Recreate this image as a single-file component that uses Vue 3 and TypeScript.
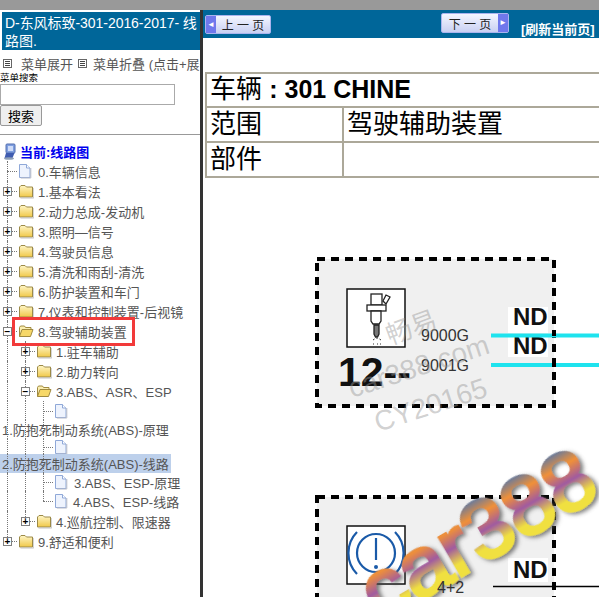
<template>
  <div class="page">
    <div class="top-strip"></div>
    <div class="frames">
      <aside class="side">
        <div class="title">D-东风标致-301-2016-2017- 线路图.</div>
        <div class="tools">
          <span class="tool-ico"></span><span class="tool-text">菜单展开</span>
          <span class="tool-ico second"></span><span class="tool-text">菜单折叠 (点击+展开)</span>
        </div>
        <label class="search-label">菜单搜索</label>
        <input class="search-input" type="text" />
        <button class="search-btn">搜索</button>
        <hr class="rule" />

        <div class="root">
          <svg class="root-ico" width="16" height="17" viewBox="0 0 16 17">
            <rect x="4" y="1" width="9" height="9" rx="1" fill="#7f9fe0" stroke="#5570b0" />
            <rect x="6" y="3" width="5" height="5" fill="#cfdcf8" />
            <path d="M4 10l-1.500 5h8l2-5z" fill="#3f5cb0" />
            <ellipse cx="7" cy="15.500" rx="5" ry="1.300" fill="#8fa0b8" />
          </svg>
          <span>当前:线路图</span>
        </div>

        <div class="tree">
          <div
            v-for="(row, i) in rows"
            :key="i"
            class="row"
            :class="{ hl: row.active }"
            :style="{ height: (row.h ?? 20) + 'px' }"
          >
            <i v-for="g in row.guides" :key="g" class="guide" :style="{ left: g * 18 + 7 + 'px' }"></i>
            <template v-if="row.plain">
              <span class="plain-label">{{ row.label }}</span>
            </template>
            <template v-else>
              <span class="spacer" :style="{ width: row.depth * 18 + 2 + 'px' }"></span>
              <span class="joint" :class="{ elbow: row.last }">
                <span v-if="row.toggle" class="toggle">{{ row.toggle === 'plus' ? '+' : '−' }}</span>
              </span>
              <svg v-if="row.icon === 'file'" class="node-ico" width="15" height="16" viewBox="0 0 15 16">
                <path d="M1.500 1.500h7l3.500 3.500v9.500h-10.500z" fill="#eef3fd" stroke="#8fa8d8" />
                <path d="M8.500 1.500v3.500h3.500" fill="#fff" stroke="#8fa8d8" />
                <path d="M12.800 5v10h-10" fill="none" stroke="#b8bcc8" />
              </svg>
              <svg v-else-if="row.icon === 'open'" class="node-ico" width="16" height="16" viewBox="0 0 16 16">
                <path d="M1.500 13.500v-9l1-1.500h4l1 1.500h5.500v2" fill="#fbeeb0" stroke="#a08a40" />
                <path d="M1.500 13.500l2.500-7h11l-2.500 7z" fill="#f7d868" stroke="#a08a40" />
              </svg>
              <svg v-else class="node-ico" width="16" height="16" viewBox="0 0 16 16">
                <defs>
                  <linearGradient :id="'fold' + i" x1="0" y1="0" x2="0" y2="1">
                    <stop offset="0" stop-color="#fff6c8" />
                    <stop offset="1" stop-color="#f0c848" />
                  </linearGradient>
                </defs>
                <path d="M1.500 14v-10l1.500-1.500h4l1.500 1.500h6v10z" :fill="`url(#fold${i})`" stroke="#9c8a48" />
                <path d="M2.500 15h13.300v-10" fill="none" stroke="#c4c4c4" />
              </svg>
              <span class="node-label" :style="{ marginLeft: (row.gap ?? 4) + 'px' }">{{ row.label }}</span>
            </template>
          </div>
        </div>
        <div class="marker"></div>
      </aside>

      <div class="divider"></div>

      <main class="content">
        <div class="navbar">
          <button class="page-btn prev"><b class="arrow">◄</b><span>上 一 页</span></button>
          <button class="page-btn next"><span>下 一 页</span><b class="arrow">►</b></button>
          <a class="refresh">[刷新当前页]</a>
        </div>

        <table class="info">
          <tbody>
            <tr class="first">
              <td colspan="2">车辆 <b>: 301 CHINE</b></td>
            </tr>
            <tr>
              <td class="key">范围</td>
              <td>驾驶辅助装置</td>
            </tr>
            <tr>
              <td class="key">部件</td>
              <td></td>
            </tr>
          </tbody>
        </table>

        <svg class="diagram" width="396" height="419" viewBox="203 178 396 419">
          <defs>
            <linearGradient id="mark-grad" x1="0" y1="0.15" x2="0" y2="0.8">
              <stop offset="0" stop-color="#5878a8" />
              <stop offset="0.28" stop-color="#f09038" />
              <stop offset="0.55" stop-color="#a05aa0" />
              <stop offset="0.82" stop-color="#f0e040" />
            </linearGradient>
            <filter id="mark-shadow" x="-10%" y="-20%" width="120%" height="150%">
              <feDropShadow dx="2" dy="3" stdDeviation="2" flood-color="#444" flood-opacity="0.7" />
            </filter>
          </defs>

          <!-- 第一个模块 -->
          <rect class="box" x="317" y="259" width="237" height="147" />
          <rect class="ico-frame" x="347" y="289" width="58" height="58" />
          <g fill="#fff" stroke="#222" stroke-width="1.300">
            <rect x="371" y="294" width="11" height="11" />
            <path d="M383 301l3-6 4 2-4 7z" />
            <rect x="367" y="305" width="19" height="6" />
            <path d="M371 311h10v10l-2 3h-6l-2-3z" />
            <path d="M374 325h5v9l-1.500 3h-2l-1.500-3z" fill="#777" />
          </g>
          <path d="M373 340l1.500-1M377 338v1M381 340l-1.500-1M373 344h1M377 344h1M381 344h-1" stroke="#333" fill="none" />
          <text class="big" x="338" y="386">12--</text>
          <text class="code" x="421" y="341">9000G</text>
          <text class="code" x="421" y="371">9001G</text>
          <rect x="508" y="307" width="40" height="26" fill="#fff" />
          <rect x="508" y="337" width="40" height="20" fill="#fff" />
          <text class="nd" x="513" y="325">ND</text>
          <text class="nd" x="513" y="354">ND</text>
          <path d="M491 335.500h108M491 365h108" stroke="#1ee3ee" stroke-width="4" />
          <path d="M554 330v6M554 361v6" stroke="#000" stroke-width="4" />

          <text class="soft cjk" transform="translate(390 345) rotate(-20)">畅易</text>
          <text class="soft" transform="translate(352 398) rotate(-18)">car388.com</text>
          <text class="soft" transform="translate(378 432) rotate(-18)">CY20165</text>

          <!-- 第二个模块 -->
          <rect class="box" x="317" y="497" width="237" height="130" />
          <rect class="ico-frame" x="347" y="526" width="58" height="58" />
          <g fill="none" stroke="#1a5aa8" stroke-width="2.200">
            <circle cx="376" cy="553" r="19" />
            <path d="M357 532a30 30 0 0 0 0 42M395 532a30 30 0 0 1 0 42" />
            <path d="M376 538v22" />
          </g>
          <circle cx="376" cy="567" r="2" fill="#1a5aa8" />
          <text class="big" x="350" y="626">1</text>
          <rect x="508" y="558" width="40" height="24" fill="#fff" />
          <text class="nd" x="513" y="578">ND</text>
          <path d="M493 586.500h106" stroke="#000" stroke-width="1.500" />

          <text class="mark" transform="translate(380 623) rotate(-30)">car388</text>
          <text class="code" x="437" y="593">4+2</text>
        </svg>
      </main>
    </div>
  </div>
</template>

<script setup lang="ts">
interface TreeRow {
  label: string
  depth: number
  guides: number[]
  toggle?: 'plus' | 'minus'
  icon?: 'file' | 'folder' | 'open'
  last?: boolean
  plain?: boolean
  active?: boolean
  gap?: number
  h?: number
}

const top = (label: string, toggle: 'plus' | 'minus' = 'plus', icon: 'folder' | 'open' = 'folder'): TreeRow => ({
  label,
  depth: 0,
  guides: [0],
  toggle,
  icon
})

const rows: TreeRow[] = [
  { label: '0.车辆信息', depth: 0, guides: [0], icon: 'file', gap: 5 },
  top('1.基本看法'),
  top('2.动力总成-发动机'),
  top('3.照明—信号'),
  top('4.驾驶员信息'),
  top('5.清洗和雨刮-清洗'),
  top('6.防护装置和车门'),
  top('7.仪表和控制装置-后视镜'),
  top('8.驾驶辅助装置', 'minus', 'open'),
  { label: '1.驻车辅助', depth: 1, guides: [0, 1], toggle: 'plus', icon: 'folder' },
  { label: '2.助力转向', depth: 1, guides: [0, 1], toggle: 'plus', icon: 'folder' },
  { label: '3.ABS、ASR、ESP', depth: 1, guides: [0, 1], toggle: 'minus', icon: 'open' },
  { label: '', depth: 2, guides: [0, 1, 2], icon: 'file', h: 19 },
  { label: '1.防抱死制动系统(ABS)-原理', depth: 0, guides: [0, 1, 2], plain: true, h: 19 },
  { label: '', depth: 2, guides: [0, 1, 2], icon: 'file', h: 15 },
  { label: '2.防抱死制动系统(ABS)-线路', depth: 0, guides: [0, 1, 2], plain: true, active: true, h: 19 },
  { label: '3.ABS、ESP-原理', depth: 2, guides: [0, 1, 2], icon: 'file', gap: 5, h: 18 },
  { label: '4.ABS、ESP-线路', depth: 2, guides: [0, 1], icon: 'file', last: true, gap: 4 },
  { label: '4.巡航控制、限速器', depth: 1, guides: [0], toggle: 'plus', icon: 'folder', last: true },
  { label: '9.舒适和便利', depth: 0, guides: [], toggle: 'plus', icon: 'folder', last: true }
]
</script>

<style>
html,
body {
  margin: 0;
  overflow: hidden;
}
</style>

<style scoped>
.page {
  width: 599px;
  height: 597px;
  overflow: hidden;
  background: #fff;
  font-family: "Liberation Sans", "Noto Sans CJK SC", sans-serif;
}
.top-strip {
  height: 10px;
  background: #999;
}
.frames {
  display: flex;
  height: 587px;
}

/* 左侧菜单 */
.side {
  position: relative;
  width: 200px;
  flex: none;
  overflow: hidden;
  padding-top: 2px;
  box-sizing: border-box;
}
.title {
  margin-left: 2px;
  padding: 2px 0 0 3px;
  height: 38px;
  box-sizing: border-box;
  background: #006699;
  color: #fff;
  font-size: 14px;
  line-height: 18px;
  letter-spacing: -0.05px;
  overflow: hidden;
}
.tools {
  display: flex;
  align-items: center;
  height: 20px;
  margin-top: 3px;
  white-space: nowrap;
  font-size: 13px;
  color: #555;
}
.tool-ico {
  width: 7px;
  height: 7px;
  margin: 0 9px 0 3px;
  flex: none;
  border: 1px solid #666;
  background:
    linear-gradient(#444, #444) center 1px / 5px 1px no-repeat,
    linear-gradient(#444, #444) center 3px / 5px 1px no-repeat,
    linear-gradient(#444, #444) center 5px / 5px 1px no-repeat;
}
.tool-ico.second {
  margin-right: 6px;
}
.tool-text {
  margin-right: 2px;
}
.search-label {
  display: block;
  margin-top: -1px;
  font-size: 9.500px;
  line-height: 12px;
  color: #000;
}
.search-input {
  display: block;
  width: 175px;
  height: 21px;
  box-sizing: border-box;
  margin: 0;
  border: 1px solid #aaa;
}
.search-btn {
  display: block;
  width: 42px;
  height: 21px;
  padding: 0;
  margin: 0;
  border: 1px solid #999;
  border-radius: 2px;
  background: #efefef;
  font-family: inherit;
  font-size: 13px;
  color: #000;
}
.rule {
  height: 1px;
  margin: 8px 0 0;
  border: 0;
  background: #999;
}
.root {
  display: flex;
  align-items: center;
  height: 20px;
  margin-top: 6px;
  padding-left: 2px;
  color: #0000ee;
  font-size: 13px;
  font-weight: bold;
}
.root-ico {
  margin-right: 2px;
}
.tree {
  font-size: 13px;
  color: #555;
}
.row {
  position: relative;
  display: flex;
  align-items: center;
  white-space: nowrap;
}
.row.hl {
  width: 171px;
  background: #bdd0eb;
}
.guide {
  position: absolute;
  top: 0;
  bottom: 0;
  border-left: 1px dotted #777;
}
.spacer {
  flex: none;
}
.joint {
  position: relative;
  flex: none;
  width: 16px;
  height: 100%;
}
.joint::before {
  content: "";
  position: absolute;
  left: 5px;
  right: 1px;
  top: 50%;
  border-top: 1px dotted #777;
}
.joint.elbow::after {
  content: "";
  position: absolute;
  left: 5px;
  top: 0;
  height: 50%;
  border-left: 1px dotted #777;
}
.toggle {
  position: absolute;
  z-index: 1;
  left: 1px;
  top: 50%;
  width: 7px;
  height: 7px;
  margin-top: -4px;
  border: 1px solid #808080;
  background: #fff;
  color: #000;
  font: bold 10px/7px "Liberation Sans", sans-serif;
  text-align: center;
}
.node-ico {
  flex: none;
}
.node-label {
  position: relative;
}
.plain-label {
  position: relative;
  padding-left: 2px;
}
.marker {
  position: absolute;
  left: 12px;
  top: 307px;
  width: 117px;
  height: 23px;
  border: 3px solid #f23a3a;
  pointer-events: none;
}

.divider {
  flex: none;
  width: 3px;
  background: #333;
}

/* 右侧内容 */
.content {
  flex: 1;
  min-width: 0;
  overflow: hidden;
}
.navbar {
  position: relative;
  height: 28px;
  background: #006699;
}
.page-btn {
  position: absolute;
  display: flex;
  align-items: center;
  height: 19px;
  padding: 0;
  border: 1px solid #aab4ee;
  border-radius: 2px;
  background: linear-gradient(#f4f6ff, #c9d0f2);
  font-family: inherit;
  font-size: 12px;
  color: #222;
  white-space: nowrap;
}
.page-btn span {
  flex: 1;
  text-align: center;
}
.page-btn .arrow {
  flex: none;
  width: 10px;
  height: 100%;
  background: #6f78ec;
  color: #fff;
  font-size: 8px;
  line-height: 17px;
}
.prev {
  left: 2px;
  top: 5px;
  width: 66px;
}
.next {
  left: 238px;
  top: 3px;
  width: 68px;
  height: 20px;
}
.refresh {
  position: absolute;
  left: 318px;
  top: 9px;
  color: #fff;
  font-size: 13px;
  font-weight: bold;
  white-space: nowrap;
}
.info {
  width: 520px;
  margin: 34px 0 0 2px;
  border: 1px solid #aca899;
  border-spacing: 0;
  border-collapse: separate;
  color: #000;
  font-size: 26px;
  line-height: 30px;
}
.info td {
  height: 35px;
  padding: 0 0 2px 3px;
  box-sizing: border-box;
  border: 1px solid #aca899;
}
.info .first td {
  height: 34px;
}
.info b {
  font-size: 25px;
}
.info .key {
  width: 137px;
}
.diagram {
  display: block;
}
.box {
  fill: #f0f0f0;
  stroke: #000;
  stroke-width: 4;
  stroke-dasharray: 8 6;
}
.ico-frame {
  fill: #fff;
  stroke: #111;
  stroke-width: 1.500;
}
.big {
  font: bold 41px "Liberation Sans", sans-serif;
  fill: #111;
}
.code {
  font: 16px "Liberation Sans", sans-serif;
  fill: #333;
}
.nd {
  font: bold 24px "Liberation Sans", sans-serif;
  fill: #111;
}
.soft {
  font: 28px "Liberation Sans", sans-serif;
  fill: #999;
  fill-opacity: 0.45;
}
.soft.cjk {
  font: 26px "Noto Sans CJK SC", sans-serif;
}
.mark {
  font: 84px "Liberation Sans", sans-serif;
  fill: url(#mark-grad);
  stroke: url(#mark-grad);
  stroke-width: 3.500;
  filter: url(#mark-shadow);
}
</style>
